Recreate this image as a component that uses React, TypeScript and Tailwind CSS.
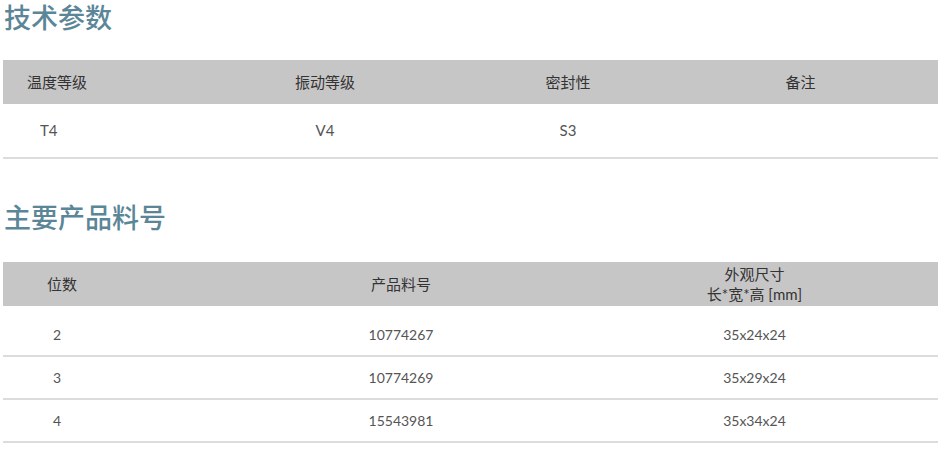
const font = { fontFamily: '"Lato", "Noto Sans CJK SC", sans-serif' };

const params = [
  { label: '温度等级', value: 'T4' },
  { label: '振动等级', value: 'V4' },
  { label: '密封性', value: 'S3' },
  { label: '备注', value: '' },
];

const parts = [
  { digits: '2', code: '10774267', size: '35x24x24' },
  { digits: '3', code: '10774269', size: '35x29x24' },
  { digits: '4', code: '15543981', size: '35x34x24' },
];

function Heading({ children }: { children: string }) {
  return (
    <h2 className="text-[27px] leading-[36px] text-[#5b8698] font-medium pl-[1px]">{children}</h2>
  );
}

export default function App() {
  return (
    <div className="w-[939px] h-[451px] bg-white px-[3px] overflow-hidden" style={font}>
      <Heading>技术参数</Heading>

      <div className="mt-6 w-[935px]">
        <div className="grid grid-cols-[174px_296px_190px_1fr] h-[44px] items-center bg-[#c7c6c7] text-[15px] text-[#333]">
          <div className="pl-[24px]">{params[0].label}</div>
          <div className="text-center">{params[1].label}</div>
          <div className="text-center">{params[2].label}</div>
          <div className="text-center">{params[3].label}</div>
        </div>
        <div className="grid grid-cols-[174px_296px_190px_1fr] h-[55px] items-center border-b-2 border-[#dcdcdc] text-[15px] text-[#555]">
          <div className="pl-[37px]">{params[0].value}</div>
          <div className="text-center">{params[1].value}</div>
          <div className="text-center">{params[2].value}</div>
          <div className="text-center">{params[3].value}</div>
        </div>
      </div>

      <div className="mt-[41px]">
        <Heading>主要产品料号</Heading>
      </div>

      <div className="mt-[26px] w-[935px]">
        <div className="grid grid-cols-[228px_340px_1fr] h-[44px] items-center bg-[#c7c6c7] text-[15px] text-[#333]">
          <div className="pl-[44px]">位数</div>
          <div className="text-center">产品料号</div>
          <div className="text-center leading-[20px]">
            <div>外观尺寸</div>
            <div>长*宽*高 [mm]</div>
          </div>
        </div>
        <div className="pt-[8px]">
          {parts.map((p) => (
            <div
              key={p.code}
              className="grid grid-cols-[228px_340px_1fr] h-[43px] items-center border-b-2 border-[#dcdcdc] text-[14px] text-[#555]"
            >
              <div className="pl-[50px]">{p.digits}</div>
              <div className="text-center">{p.code}</div>
              <div className="text-center">{p.size}</div>
            </div>
          ))}
        </div>
      </div>
    </div>
  );
}
